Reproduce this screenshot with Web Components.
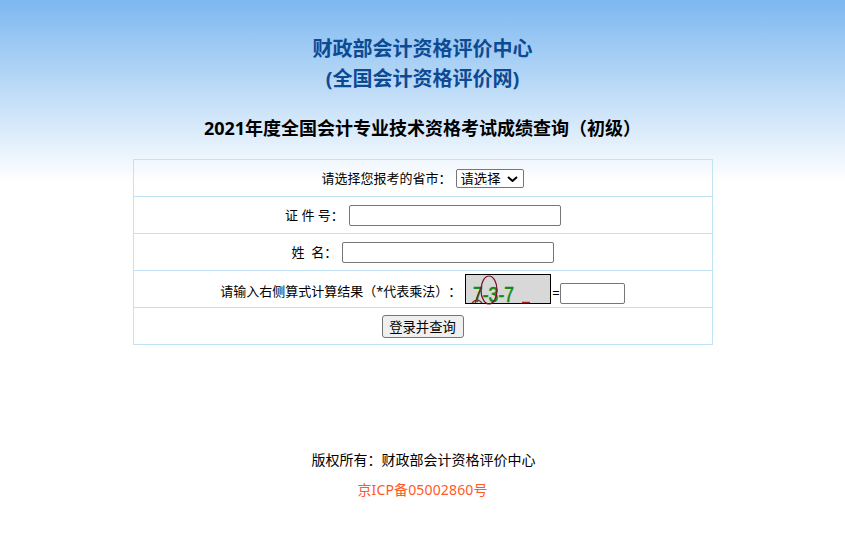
<!DOCTYPE html>
<html lang="zh">
<head>
<meta charset="utf-8">
<title>成绩查询</title>
<style>
  html, body { margin: 0; padding: 0; }
  body {
    height: 548px;
    overflow: hidden;
    background: linear-gradient(#7db8f0 0, #ffffff 182px) no-repeat;
    font-family: "Noto Sans", "Noto Sans CJK SC", sans-serif;
    text-spacing-trim: space-all;
    color: #000;
  }
</style>
</head>
<body>
<exam-page>
  <exam-header slot="header"
    org="财政部会计资格评价中心"
    site="(全国会计资格评价网)"
    heading="2021年度全国会计专业技术资格考试成绩查询（初级）"></exam-header>
  <query-form slot="form"></query-form>
  <site-footer slot="footer"
    owner="版权所有：财政部会计资格评价中心"
    icp="京ICP备05002860号"></site-footer>
</exam-page>

<script>
class ExamPage extends HTMLElement {
  constructor() {
    super();
    this.attachShadow({ mode: "open" });
    this.shadowRoot.innerHTML = `
      <style>
        :host { display: flex; flex-direction: column; align-items: center; padding-top: 34px; }
        .form { margin-top: 16px; }
        .footer { margin-top: 100px; }
      </style>
      <slot name="header"></slot>
      <div class="form"><slot name="form"></slot></div>
      <div class="footer"><slot name="footer"></slot></div>
    `;
  }
}

class ExamHeader extends HTMLElement {
  connectedCallback() {
    const root = this.attachShadow({ mode: "open" });
    root.innerHTML = `
      <style>
        :host { display: block; text-align: center; }
        h1 { margin: 0; font-size: 20px; line-height: 30px; font-weight: 700; color: #0d4a94; }
        h2 { margin: 19px 0 0; font-size: 18px; line-height: 30px; font-weight: 700; color: #000; }
      </style>
      <h1>${this.getAttribute("org")}<br>${this.getAttribute("site")}</h1>
      <h2>${this.getAttribute("heading")}</h2>
    `;
  }
}

class FormRow extends HTMLElement {
  constructor() {
    super();
    this.attachShadow({ mode: "open" });
    this.shadowRoot.innerHTML = `
      <style>
        :host {
          display: flex;
          align-items: center;
          justify-content: center;
          height: 36px;
          border-bottom: 1px solid #c0e4f5;
          font-size: 13px;
          white-space: pre;
        }
      </style>
      <slot></slot>
    `;
  }
}

class CaptchaImage extends HTMLElement {
  constructor() {
    super();
    this.attachShadow({ mode: "open" });
    this.shadowRoot.innerHTML = `
      <style>
        :host { display: block; width: 84px; height: 28px; border: 1px solid #000; background: #d8d8d8; white-space: normal; }
        svg { display: block; overflow: visible; }
        text { font: 400 22px "Liberation Sans", sans-serif; fill: #128a12; stroke: #128a12; stroke-width: 0.6; }
      </style>
      <svg width="84" height="28" viewBox="0 0 84 28">
        <text x="7" y="27" textLength="41" lengthAdjust="spacingAndGlyphs">7-3-7</text>
        <ellipse cx="23" cy="15" rx="8" ry="14" fill="none" stroke="#7a1228" stroke-width="1.2"/>
        <path d="M16 10 L9 28 M6 28 Q11 22 16 28" fill="none" stroke="#6e2a1c" stroke-width="1.2"/>
        <path d="M56 27.5 H64" stroke="#a52020" stroke-width="1.5"/>
      </svg>
    `;
  }
}

class QueryForm extends HTMLElement {
  constructor() {
    super();
    this.attachShadow({ mode: "open" });
    this.shadowRoot.innerHTML = `
      <style>
        :host {
          display: block;
          width: 578px;
          border: 1px solid #c0e4f5;
          border-bottom: 0;
        }
        input, select, button {
          box-sizing: border-box;
          margin: 0;
          font: 13.333px "Noto Sans", "Noto Sans CJK SC", sans-serif;
          color: #000;
        }
        input {
          height: 21px;
          padding: 1px 2px;
          background: #fff;
          border: 1px solid #767676;
          border-radius: 2px;
        }
        select {
          appearance: none;
          width: 68px;
          height: 19px;
          padding: 0 0 2px 4px;
          border: 1px solid #767676;
          border-radius: 2px;
          background: #fff url("data:image/svg+xml,%3Csvg xmlns='http://www.w3.org/2000/svg' width='11' height='6'%3E%3Cpath d='M1 1l4.5 4L10 1' fill='none' stroke='%23000' stroke-width='2'/%3E%3C/svg%3E") no-repeat 50px 6px;
        }
        button {
          width: 82px;
          height: 23px;
          padding: 0;
          background: #efefef;
          border: 1px solid #767676;
          border-radius: 3px;
        }
        .wide { width: 212px; }
        .short { width: 65px; }
        .gap { margin-left: 4px; }
        .field { margin: 0 -1px 0 5px; }
        .label { margin-bottom: 2px; }
        .label-low { margin-top: 2px; }
        .captcha { margin: 0 1px 0 4px; }
        .eq { margin-top: 8px; }
        .low { align-self: flex-end; margin-bottom: 3px; }
      </style>
      <form-row><span class="label">请选择您报考的省市：</span><select class="gap"><option>请选择</option></select></form-row>
      <form-row><span class="label">证 件 号：</span><input class="wide field" type="text"></form-row>
      <form-row><span class="label">姓  名：</span><input class="wide field" type="text"></form-row>
      <form-row><span class="label-low">请输入右侧算式计算结果（*代表乘法）：</span><captcha-image class="captcha"></captcha-image><span class="eq">=</span><input class="short low" type="text"></form-row>
      <form-row><button type="button">登录并查询</button></form-row>
    `;
  }
}

class SiteFooter extends HTMLElement {
  connectedCallback() {
    const root = this.attachShadow({ mode: "open" });
    root.innerHTML = `
      <style>
        :host { display: block; text-align: center; font-size: 14px; line-height: 30px; }
        .owner { padding-left: 2px; }
        .icp { color: #ff5a26; letter-spacing: 0.15px; }
      </style>
      <div class="owner">${this.getAttribute("owner")}</div>
      <div class="icp">${this.getAttribute("icp")}</div>
    `;
  }
}

customElements.define("exam-page", ExamPage);
customElements.define("exam-header", ExamHeader);
customElements.define("form-row", FormRow);
customElements.define("captcha-image", CaptchaImage);
customElements.define("query-form", QueryForm);
customElements.define("site-footer", SiteFooter);
</script>
</body>
</html>
